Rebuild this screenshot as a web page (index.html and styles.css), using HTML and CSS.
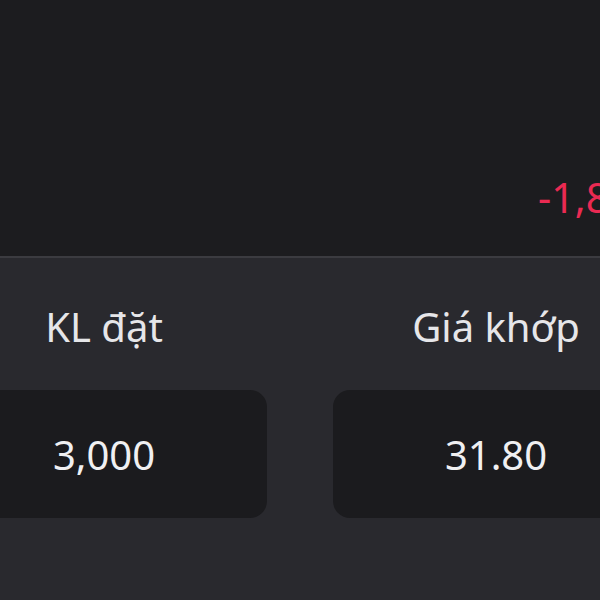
FILE: index.html
```html
<!DOCTYPE html>
<html lang="vi">
<head>
<meta charset="utf-8">
<link rel="stylesheet" href="styles.css">
</head>
<body>
<div class="screen">
  <section class="top">
    <div class="change">-1,800</div>
  </section>
  <section class="panel">
    <div class="cols">
      <div class="col">
        <div class="label">KL đặt</div>
        <div class="box">3,000</div>
      </div>
      <div class="col">
        <div class="label">Giá khớp</div>
        <div class="box">31.80</div>
      </div>
    </div>
  </section>
</div>
</body>
</html>
```

FILE: styles.css
```css
html, body {
  margin: 0;
  padding: 0;
  background: #1c1c1f;
}
.screen {
  width: 600px;
  height: 600px;
  overflow: hidden;
  display: flex;
  flex-direction: column;
  font-family: "Noto Sans", "Open Sans", sans-serif;
}
.top {
  height: 256px;
  flex: none;
  background: #1c1c1f;
  padding: 173px 0 0 538px;
  box-sizing: border-box;
  white-space: nowrap;
}
.change {
  color: #ea2a52;
  font-size: 41px;
  line-height: 48px;
}
.panel {
  flex: 1;
  background: #29292e;
  border-top: 2px solid #3b3b40;
  padding-top: 45px;
}
.cols {
  display: flex;
  gap: 66px;
  margin-left: -59px;
}
.col {
  width: 326px;
  flex: none;
  display: flex;
  flex-direction: column;
  align-items: center;
  gap: 39px;
}
.label {
  color: #e6e6e9;
  font-size: 40px;
  line-height: 48px;
  white-space: nowrap;
}
.box {
  width: 100%;
  height: 128px;
  border-radius: 17px;
  background: #1b1b1e;
  color: #f0f0f2;
  font-size: 40px;
  display: flex;
  align-items: center;
  justify-content: center;
}
```
